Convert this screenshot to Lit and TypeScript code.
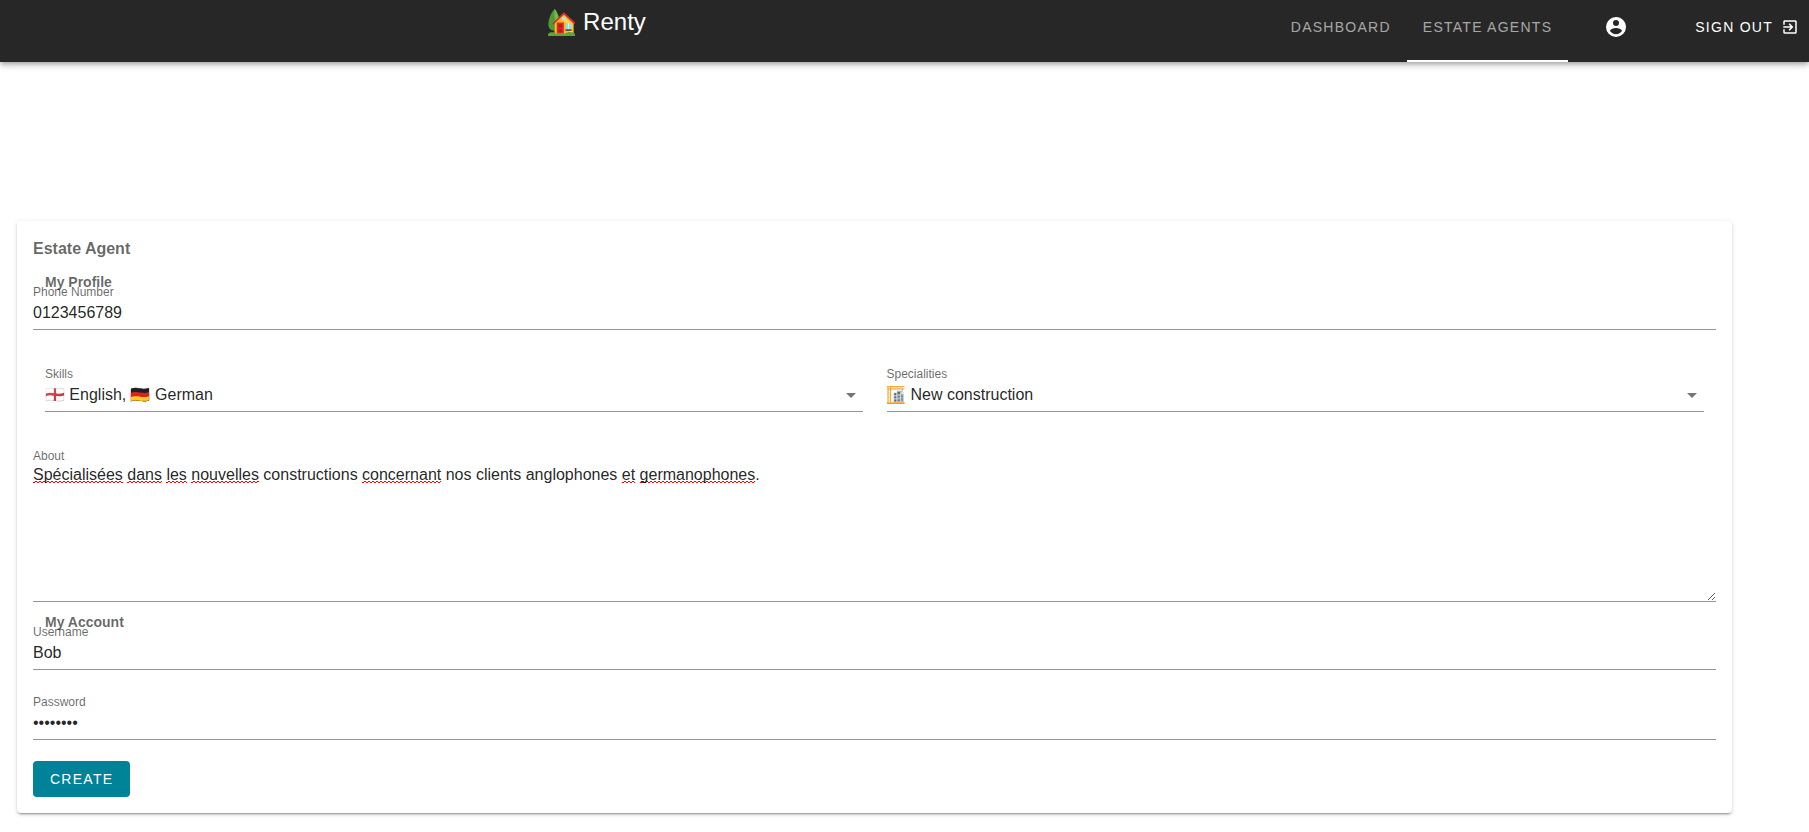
import { LitElement, html, css, svg, nothing } from "lit";
import { customElement, property } from "lit/decorators.js";
import { classMap } from "lit/directives/class-map.js";

const houseArt = svg`
  <path d="M18,44h6v30h-6z" fill="#8d5a2b" />
  <path d="M20,0C11,8 1,28 1,46C1,58 9,64 20,64C31,64 36,56 36,46C36,28 28,8 20,0Z" fill="#4f9a35" />
  <path d="M20,0C26,8 33,26 33,42C26,50 16,40 20,0Z" fill="#76b84a" />
  <path d="M20,40L47,14L76,40V75H20Z" fill="#fbb829" />
  <path d="M46,22L72,44V75H62V50L46,34Z" fill="#ffd34d" />
  <path d="M14,45L47,13L80,43" fill="none" stroke="#dd2c2c" stroke-width="5" stroke-linejoin="round" />
  <circle cx="47" cy="28" r="6" fill="#a9e3f5" />
  <rect x="26" y="40" width="21" height="33" fill="#e02a24" />
  <path d="M31,45h11v10h-11zM31,59h11v10h-11z" fill="#b71c1c" />
  <rect x="53" y="42" width="16" height="18" fill="#8fdcf4" />
  <path d="M60,42h2v18h-2z" fill="#fff" />
  <rect x="52" y="60" width="18" height="5" fill="#6d4526" />
  <path d="M0,80V74C6,67 16,67 24,73H50C58,66 74,66 80,74V80Z" fill="#5ea63c" />
`;

const siteArt = svg`
  <path d="M20,20H30V14H44V24H50V49H20Z" fill="#a7b4ba" />
  <path
    d="M22,22h7v6h-7zM32,18h7v6h-7zM22,31h7v6h-7zM32,28h7v6h-7zM42,27h6v6h-6zM22,40h7v6h-7zM32,38h7v6h-7zM42,37h6v6h-6z"
    fill="#56656d"
  />
  <path d="M29,16V48M40,20V48M21,29.5H50M21,39H50" stroke="#dfe6e9" stroke-width="2" />
  <path d="M3,1V50M11,1V50M0,2H52M2,9H52" fill="none" stroke="#f39a1f" stroke-width="3" />
  <path
    d="M3,10L11,16L3,22L11,28L3,34L11,40L3,46M12,9L18,2L24,9L30,2L36,9L42,2L48,9"
    fill="none"
    stroke="#f6b04a"
    stroke-width="2"
  />
  <path d="M46,9V18" stroke="#9aa4a9" stroke-width="2" />
  <path d="M43,18H49V22H43Z" fill="#f0f0f0" stroke="#b0b8bc" />
  <rect x="0" y="49" width="53" height="5" fill="#f39a1f" />
`;

const fieldStyles = css`
  :host {
    display: block;
    min-width: 0;
  }
  .label {
    display: block;
    font-size: 12px;
    line-height: 16px;
    color: rgba(0, 0, 0, 0.6);
  }
  .stack {
    display: grid;
  }
  .stack > * {
    grid-area: 1 / 1;
  }
  .control {
    display: block;
    box-sizing: border-box;
    width: 100%;
    margin: 0;
    padding: 0 0 3px;
    border: 0;
    border-bottom: 1px solid rgba(0, 0, 0, 0.42);
    border-radius: 0;
    outline: none;
    background: transparent;
    color: rgba(0, 0, 0, 0.87);
    font: inherit;
    font-size: 16px;
  }
  .control:focus {
    border-bottom-color: #008299;
  }
`;

@customElement("text-field")
export class TextField extends LitElement {
  @property() label = "";
  @property() value = "";
  @property() type = "text";

  static styles = [
    fieldStyles,
    css`
      .control {
        height: 30px;
        line-height: 24px;
      }
    `,
  ];

  render() {
    return html`
      <label class="label" for="control">${this.label}</label>
      <input class="control" id="control" type=${this.type} autocomplete="off" .value=${this.value} />
    `;
  }
}

@customElement("select-field")
export class SelectField extends LitElement {
  @property() label = "";
  @property() value = "";
  @property({ attribute: false }) art: unknown = null;

  static styles = [
    fieldStyles,
    css`
      .control {
        height: 30px;
        line-height: 24px;
        padding-right: 28px;
        appearance: none;
        cursor: pointer;
      }
      .control.with-art {
        padding-left: 24px;
      }
      .arrow {
        justify-self: end;
        width: 24px;
        height: 24px;
        padding-top: 1px;
        fill: rgba(0, 0, 0, 0.54);
        pointer-events: none;
      }
      .art {
        width: 18px;
        height: 18px;
        padding-top: 4px;
        pointer-events: none;
      }
    `,
  ];

  render() {
    return html`
      <label class="label" for="control">${this.label}</label>
      <div class="stack">
        <select class=${classMap({ control: true, "with-art": !!this.art })} id="control">
          <option selected>${this.value}</option>
        </select>
        ${this.art ? html`<svg class="art" viewBox="0 0 54 54" aria-hidden="true">${this.art}</svg>` : nothing}
        <svg class="arrow" viewBox="0 0 24 24" aria-hidden="true"><path d="M7,10L12,15L17,10H7Z" /></svg>
      </div>
    `;
  }
}

@customElement("spelled-textarea")
export class SpelledTextarea extends LitElement {
  @property() label = "";
  @property() value = "";
  @property({ attribute: false }) unknownWords: string[] = [];

  static styles = [
    fieldStyles,
    css`
      .control {
        height: 138px;
        line-height: 22px;
        resize: vertical;
      }
      .marks {
        font-size: 16px;
        line-height: 22px;
        color: transparent;
        white-space: pre-wrap;
        overflow-wrap: break-word;
        pointer-events: none;
        user-select: none;
      }
      .unknown {
        background: url("data:image/svg+xml,%3Csvg xmlns='http://www.w3.org/2000/svg' width='4' height='2'%3E%3Cpath d='M-1,0L1,2L3,0L5,2' fill='none' stroke='%23f00'/%3E%3C/svg%3E")
          0 15px repeat-x;
      }
    `,
  ];

  private marks() {
    return this.value
      .split(/(\s+|\.)/)
      .map((part) => (this.unknownWords.includes(part) ? html`<span class="unknown">${part}</span>` : part));
  }

  render() {
    return html`
      <label class="label" for="control">${this.label}</label>
      <div class="stack">
        <div class="marks" aria-hidden="true">${this.marks()}</div>
        <textarea
          class="control"
          id="control"
          spellcheck="false"
          .value=${this.value}
          @input=${(e: Event) => (this.value = (e.target as HTMLTextAreaElement).value)}
        ></textarea>
      </div>
    `;
  }
}

@customElement("top-bar")
export class TopBar extends LitElement {
  static styles = css`
    :host {
      display: block;
    }
    .bar {
      display: flex;
      height: 62px;
      background: #272727;
      color: #fff;
      box-shadow: 0 2px 4px -1px rgba(0, 0, 0, 0.2), 0 4px 5px rgba(0, 0, 0, 0.14), 0 1px 10px rgba(0, 0, 0, 0.12);
    }
    .brand {
      display: flex;
      flex: 0 1 66%;
      align-items: center;
      justify-content: center;
      gap: 8px;
      height: 44px;
      font-size: 24px;
      white-space: nowrap;
    }
    .house {
      width: 27px;
      height: 27px;
    }
    .nav {
      display: flex;
      margin-left: auto;
    }
    .tab,
    .sign-out {
      display: flex;
      align-items: center;
      justify-content: center;
      box-sizing: border-box;
      padding: 0 16px 6px;
      border: 0;
      border-bottom: 2px solid transparent;
      background: none;
      font: inherit;
      font-size: 14px;
      letter-spacing: 0.09em;
      text-transform: uppercase;
      text-decoration: none;
      white-space: nowrap;
      color: rgba(255, 255, 255, 0.6);
    }
    .tab.active {
      border-bottom-color: #fff;
    }
    .tab.account {
      min-width: 96px;
    }
    .sign-out {
      gap: 8px;
      padding: 0 10px 6px;
      margin-left: 21px;
      color: #fff;
      cursor: pointer;
    }
    .icon {
      width: 24px;
      height: 24px;
      fill: #fff;
    }
    .icon.small {
      width: 18px;
      height: 18px;
    }
  `;

  render() {
    return html`
      <header class="bar">
        <div class="brand">
          <svg class="house" viewBox="0 0 80 80" aria-hidden="true">${houseArt}</svg>
          <span>Renty</span>
        </div>
        <nav class="nav">
          <a class="tab" href="#dashboard">Dashboard</a>
          <a class="tab active" href="#agents" aria-current="page">Estate agents</a>
          <a class="tab account" href="#account" aria-label="Account">
            <svg class="icon" viewBox="0 0 24 24" aria-hidden="true">
              <path
                d="M12,19.2C9.5,19.2 7.29,17.92 6,16C6.03,14 10,12.9 12,12.9C14,12.9 17.97,14 18,16C16.71,17.92 14.5,19.2 12,19.2M12,5A3,3 0 0,1 15,8A3,3 0 0,1 12,11A3,3 0 0,1 9,8A3,3 0 0,1 12,5M12,2A10,10 0 0,0 2,12A10,10 0 0,0 12,22A10,10 0 0,0 22,12C22,6.47 17.5,2 12,2Z"
              />
            </svg>
          </a>
          <button class="sign-out" type="button">
            <span>Sign out</span>
            <svg class="icon small" viewBox="0 0 24 24" aria-hidden="true">
              <path
                d="M19,3H5C3.89,3 3,3.89 3,5V9H5V5H19V19H5V15H3V19A2,2 0 0,0 5,21H19A2,2 0 0,0 21,19V5C21,3.89 20.1,3 19,3M10.08,15.58L11.5,17L16.5,12L11.5,7L10.08,8.41L12.67,11H3V13H12.67L10.08,15.58Z"
              />
            </svg>
          </button>
        </nav>
      </header>
    `;
  }
}

@customElement("app-root")
export class AppRoot extends LitElement {
  static styles = css`
    :host {
      display: block;
      font-family: "Liberation Sans", "Noto Color Emoji", sans-serif;
      color: rgba(0, 0, 0, 0.87);
      background: #fff;
    }
    .page {
      padding: 159px 77px 16px 17px;
    }
    .card {
      padding: 16px;
      border-radius: 4px;
      background: #fff;
      box-shadow: 0 3px 1px -2px rgba(0, 0, 0, 0.2), 0 2px 2px rgba(0, 0, 0, 0.14), 0 1px 5px rgba(0, 0, 0, 0.12);
    }
    .title,
    .section {
      margin: 0;
      color: rgba(0, 0, 0, 0.6);
      font-weight: bold;
    }
    .title {
      margin-bottom: 11px;
      font-size: 16px;
      line-height: 24px;
    }
    /* Section headings hang over the label of the field below them. */
    .section {
      margin: 10px 12px -8px;
      font-size: 14px;
      line-height: 20px;
    }
    .columns {
      display: grid;
      grid-template-columns: 1fr 1fr;
      gap: 24px;
      margin: 36px 12px;
    }
    .spaced {
      margin-top: 24px;
    }
    .create {
      display: block;
      height: 36px;
      margin-top: 21px;
      padding: 0 17px;
      border: 0;
      border-radius: 4px;
      background: #008299;
      color: #fff;
      font: inherit;
      font-size: 14px;
      letter-spacing: 0.09em;
      text-transform: uppercase;
      cursor: pointer;
    }
  `;

  private unknownWords = ["Spécialisées", "dans", "les", "nouvelles", "concernant", "et", "germanophones"];

  render() {
    return html`
      <top-bar></top-bar>
      <main class="page">
        <form class="card" @submit=${(e: Event) => e.preventDefault()}>
          <h1 class="title">Estate Agent</h1>
          <h2 class="section">My Profile</h2>
          <text-field label="Phone Number" type="tel" value="0123456789"></text-field>
          <div class="columns">
            <select-field label="Skills" value="🏴󠁧󠁢󠁥󠁮󠁧󠁿 English, 🇩🇪 German"></select-field>
            <select-field label="Specialities" value="New construction" .art=${siteArt}></select-field>
          </div>
          <spelled-textarea
            label="About"
            value="Spécialisées dans les nouvelles constructions concernant nos clients anglophones et germanophones."
            .unknownWords=${this.unknownWords}
          ></spelled-textarea>
          <h2 class="section">My Account</h2>
          <text-field label="Username" value="Bob"></text-field>
          <text-field class="spaced" label="Password" type="password" value="password"></text-field>
          <button class="create" type="submit">Create</button>
        </form>
      </main>
    `;
  }
}
